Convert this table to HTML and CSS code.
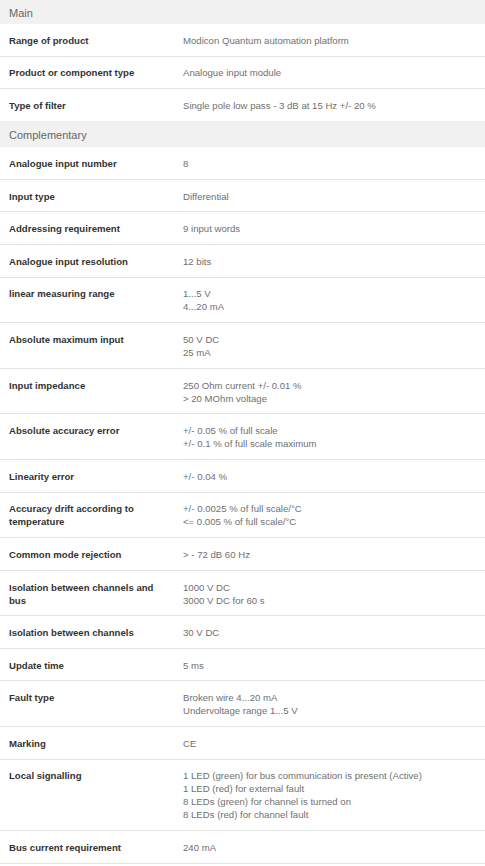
FILE: index.html
```html
<!DOCTYPE html>
<html lang="en">
<head>
<meta charset="utf-8">
<title>Specifications</title>
<link rel="stylesheet" href="styles.css">
</head>
<body>
<div class="specs">
  <div class="section-head section-head--first">Main</div>
  <div class="row"><div class="label">Range of product</div><div class="value">Modicon Quantum automation platform</div></div>
  <div class="row"><div class="label">Product or component type</div><div class="value">Analogue input module</div></div>
  <div class="row row--last"><div class="label">Type of filter</div><div class="value">Single pole low pass - 3 dB at 15 Hz +/- 20 %</div></div>

  <div class="section-head">Complementary</div>
  <div class="row"><div class="label">Analogue input number</div><div class="value">8</div></div>
  <div class="row"><div class="label">Input type</div><div class="value">Differential</div></div>
  <div class="row"><div class="label">Addressing requirement</div><div class="value">9 input words</div></div>
  <div class="row"><div class="label">Analogue input resolution</div><div class="value">12 bits</div></div>
  <div class="row"><div class="label">linear measuring range</div><div class="value">1...5 V<br>4...20 mA</div></div>
  <div class="row"><div class="label">Absolute maximum input</div><div class="value">50 V DC<br>25 mA</div></div>
  <div class="row"><div class="label">Input impedance</div><div class="value">250 Ohm current +/- 0.01 %<br>&gt; 20 MOhm voltage</div></div>
  <div class="row"><div class="label">Absolute accuracy error</div><div class="value">+/- 0.05 % of full scale<br>+/- 0.1 % of full scale maximum</div></div>
  <div class="row"><div class="label">Linearity error</div><div class="value">+/- 0.04 %</div></div>
  <div class="row"><div class="label">Accuracy drift according to temperature</div><div class="value">+/- 0.0025 % of full scale/°C<br>&lt;= 0.005 % of full scale/°C</div></div>
  <div class="row"><div class="label">Common mode rejection</div><div class="value">&gt; - 72 dB 60 Hz</div></div>
  <div class="row"><div class="label">Isolation between channels and bus</div><div class="value">1000 V DC<br>3000 V DC for 60 s</div></div>
  <div class="row"><div class="label">Isolation between channels</div><div class="value">30 V DC</div></div>
  <div class="row"><div class="label">Update time</div><div class="value">5 ms</div></div>
  <div class="row"><div class="label">Fault type</div><div class="value">Broken wire 4...20 mA<br>Undervoltage range 1...5 V</div></div>
  <div class="row"><div class="label">Marking</div><div class="value">CE</div></div>
  <div class="row"><div class="label">Local signalling</div><div class="value">1 LED (green) for bus communication is present (Active)<br>1 LED (red) for external fault<br>8 LEDs (green) for channel is turned on<br>8 LEDs (red) for channel fault</div></div>
  <div class="row"><div class="label">Bus current requirement</div><div class="value">240 mA</div></div>
</div>
</body>
</html>
```

FILE: styles.css
```css
html, body {
  margin: 0;
  padding: 0;
  background: #ffffff;
}

.specs {
  font-family: "Liberation Sans", Arial, sans-serif;
  display: flex;
  flex-direction: column;
}

.section-head {
  background: #f1f1f1;
  color: #666666;
  font-size: 11px;
  line-height: 14px;
  padding: 6.5px 9px 5.5px;
}

.section-head--first {
  padding-top: 5.5px;
  padding-bottom: 4.5px;
}

.row {
  display: grid;
  grid-template-columns: 183px 1fr;
  border-bottom: 1px solid #e2e2e2;
  padding: 9.8px 0 8.8px;
  font-size: 9.6px;
  line-height: 13px;
}

.row--last {
  border-bottom: none;
  padding-bottom: 9.2px;
}

.label {
  font-weight: bold;
  color: #333333;
  padding: 0 19px 0 9px;
}

.value {
  color: #707070;
}
```
